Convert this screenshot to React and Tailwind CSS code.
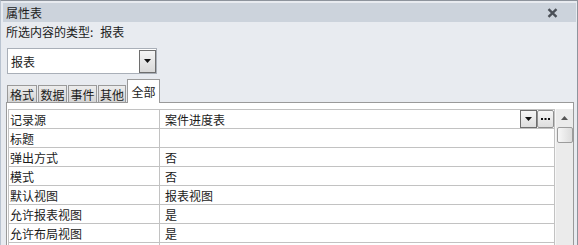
import React from "react";

const rows = [
  { name: "记录源", value: "案件进度表", picker: true },
  { name: "标题", value: "" },
  { name: "弹出方式", value: "否" },
  { name: "模式", value: "否" },
  { name: "默认视图", value: "报表视图" },
  { name: "允许报表视图", value: "是" },
  { name: "允许布局视图", value: "是" },
  { name: "", value: "" },
];

const tabs = [
  { label: "格式", w: "w-[30px]" },
  { label: "数据", w: "w-[29px]" },
  { label: "事件", w: "w-[29px]" },
  { label: "其他", w: "w-[28px]" },
];

// small black down arrow used on combo buttons
const DownArrow = () => (
  <svg width="7" height="4" viewBox="0 0 7 4">
    <path d="M0 0h7L3.5 4z" fill="#111" />
  </svg>
);

const PropertySheet = () => {
  return (
    <div className="w-[578px] h-[245px] overflow-hidden bg-[#e8ebf0] border-t border-l border-r border-t-[#8e949d] border-l-[#b9c3d0] border-r-[#8e949d] text-[12px] leading-[17px] text-[#1b1b1b] font-['Noto_Sans_CJK_SC',sans-serif]">
      {/* title bar */}
      <div className="ml-[2px] mr-[1px] mt-[2px] h-[19px] bg-[#ccd3dc] flex items-center justify-between pl-[3px] pr-[18px]">
        <span>属性表</span>
        <svg width="11" height="10" viewBox="0 0 11 10">
          <path d="M1.5 1.2l8 7.6M9.5 1.2l-8 7.6" stroke="#4b5058" strokeWidth="2.4" />
        </svg>
      </div>

      <div className="pl-[5px]">
        <div className="h-[18px] flex items-center">
          <span>所选内容的类型:</span>
          <span className="pl-[7px]">报表</span>
        </div>

        {/* selection combo */}
        <div className="mt-[8px] ml-[1px] w-[150px] h-[26px] bg-white border border-[#a9afb8] flex items-center justify-between">
          <span className="pl-[3px]">报表</span>
          <div className="w-[17px] h-[23px] border border-[#6e6e6e] bg-gradient-to-b from-[#f4f4f4] to-[#d9d9d9] flex items-center justify-center">
            <DownArrow />
          </div>
        </div>

        {/* tabs */}
        <div className="mt-[5px] ml-[1px] h-[23px] flex items-end gap-[1px]">
          {tabs.map((t) => (
            <div
              key={t.label}
              className={`${t.w} h-[17px] border border-b-0 border-[#9a9a9a] bg-gradient-to-b from-[#ececec] to-[#d4d4d4] flex items-center justify-center`}
            >
              {t.label}
            </div>
          ))}
          <div className="relative z-10 w-[33px] h-[24px] -mb-[1px] border border-b-0 border-[#9a9a9a] bg-white flex items-center justify-center">
            全部
          </div>
        </div>

        {/* tab page */}
        <div className="w-[568px] h-[200px] bg-white border border-[#9a9a9a] pt-[6px] pl-[1px] flex">
          <div className="w-[547px] border-l border-t border-[#c2c2c2]">
            {rows.map((r, i) => (
              <div key={i} className="h-[19px] flex border-b border-[#c2c2c2]">
                <div className="w-[151px] pl-[1px] border-r border-[#c2c2c2] flex items-center">
                  {r.name}
                </div>
                <div className="flex-1 pl-[5px] border-r border-[#c2c2c2] flex items-center justify-between">
                  <span>{r.value}</span>
                  {r.picker && (
                    <div className="flex">
                      <div className="w-[17px] h-[18px] border border-[#6e6e6e] bg-gradient-to-b from-[#f6f6f6] to-[#dedede] flex items-center justify-center">
                        <DownArrow />
                      </div>
                      <div className="w-[17px] h-[18px] border border-[#8f8f8f] rounded-[2px] bg-gradient-to-b from-[#f6f6f6] to-[#dedede] flex items-center justify-center">
                        <svg width="9" height="3" viewBox="0 0 9 3">
                          <rect x="0" y="0" width="2" height="2" fill="#111" />
                          <rect x="3.5" y="0" width="2" height="2" fill="#111" />
                          <rect x="7" y="0" width="2" height="2" fill="#111" />
                        </svg>
                      </div>
                    </div>
                  )}
                </div>
              </div>
            ))}
          </div>

          {/* scrollbar */}
          <div className="flex-1 bg-[#ebebeb] border-l border-[#f7f7f7] flex flex-col items-center">
            <div className="h-[18px] flex items-center justify-center">
              <svg width="7" height="4" viewBox="0 0 7 4">
                <path d="M0 4h7L3.5 0z" fill="#555" />
              </svg>
            </div>
            <div className="w-[16px] h-[16px] border border-[#9c9c9c] rounded-[2px] bg-gradient-to-r from-[#f7f7f7] to-[#dcdcdc]" />
          </div>
        </div>
      </div>
    </div>
  );
};

export default function App() {
  return <PropertySheet />;
}
